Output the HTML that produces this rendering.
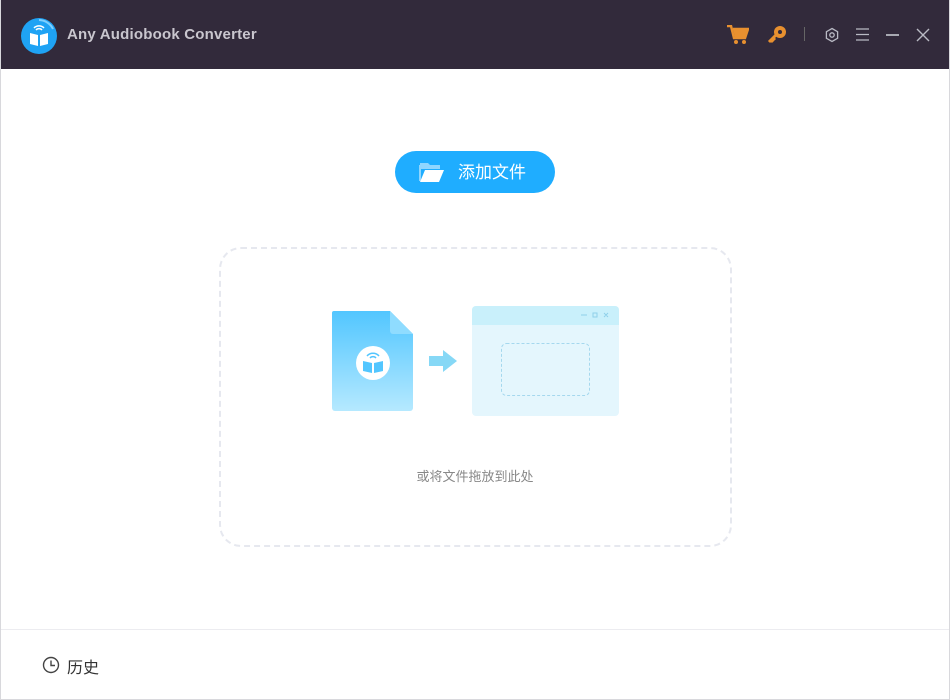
<!DOCTYPE html>
<html><head><meta charset="utf-8"><style>
*{margin:0;padding:0;box-sizing:border-box}
body{width:950px;height:700px;background:#fff;font-family:"Liberation Sans","Noto Sans CJK SC",sans-serif;position:relative;overflow:hidden}
.frame{position:absolute;inset:0;border:1px solid #d8d8dc;border-top:none}
.hdr{position:absolute;left:0;top:0;width:950px;height:69px;background:#322a3b}
.title{position:absolute;left:67px;top:26px;color:#c9c6ce;font-weight:bold;font-size:15px;letter-spacing:.2px}
.btn{position:absolute;left:395px;top:151px;width:160px;height:42px;border-radius:21px;background:#1fadff;color:#fff;font-size:17px}
.btn span{position:absolute;left:63px;top:7px}
.drop{position:absolute;left:219px;top:247px;width:513px;height:300px;border:2px dashed #e6e8ef;border-radius:22px}
.hint{position:absolute;left:0;width:950px;top:466px;text-align:center;color:#888;font-size:13px}
.foot{position:absolute;left:1px;right:1px;top:629px;height:1px;background:#ececf0}
.hist{position:absolute;left:67px;top:654px;font-size:16px;color:#333}
</style></head><body>
<div class="hdr"></div>
<svg style="position:absolute;left:20px;top:17px" width="38" height="38" viewBox="0 0 38 38">
<circle cx="19" cy="19" r="18" fill="#1fa3f4"/>
<path d="M19 3a16 16 0 0 1 14 9" stroke="#7fd0ff" stroke-width="2" fill="none"/>
<path d="M14 11a7 7 0 0 1 10 0M16 13a4 4 0 0 1 6 0" stroke="#fff" stroke-width="1.5" fill="none"/>
<path d="M10 16l8 2v11l-8-2zM28 16l-8 2v11l8-2z" fill="#fff"/>
</svg>
<div class="title">Any Audiobook Converter</div>
<svg style="position:absolute;left:727px;top:25px" width="22" height="20" viewBox="0 0 22 20"><path d="M0 1h4l3 12h11l3-9H6" fill="none" stroke="#e8902f" stroke-width="2.5"/><path d="M6 4h15l-3 9H8z" fill="#e8902f"/><circle cx="9" cy="17" r="2" fill="#e8902f"/><circle cx="17" cy="17" r="2" fill="#e8902f"/></svg>
<svg style="position:absolute;left:767px;top:25px" width="20" height="20" viewBox="0 0 20 20"><circle cx="13" cy="7" r="6" fill="#e8902f"/><circle cx="13" cy="7" r="2" fill="#322a3b"/><path d="M9 10l-7 7M4 15l2 2M6 13l2 2" stroke="#e8902f" stroke-width="3"/></svg>
<div style="position:absolute;left:804px;top:27px;width:1px;height:14px;background:#666"></div>
<svg style="position:absolute;left:824px;top:27px" width="16" height="16" viewBox="0 0 16 16"><path d="M8 1.5l5.6 3.2v6.6L8 14.5l-5.6-3.2V4.7z" fill="none" stroke="#b9bac4" stroke-width="1.3"/><circle cx="8" cy="8" r="2.2" fill="none" stroke="#b9bac4" stroke-width="1.3"/></svg>
<svg style="position:absolute;left:856px;top:28px" width="14" height="13"><path d="M0 1h13M0 6.5h13M0 12h13" stroke="#b9bac4" stroke-width="1.3"/></svg>
<div style="position:absolute;left:886px;top:34px;width:13px;height:2px;background:#a8a9b2"></div>
<svg style="position:absolute;left:916px;top:28px" width="14" height="14"><path d="M1 1l12 12M13 1L1 13" stroke="#b9bac4" stroke-width="1.4"/></svg>
<div class="btn"><svg style="position:absolute;left:24px;top:10px" width="26" height="22" viewBox="0 0 26 22"><path d="M1 2h8l2 2h10v4H1z" fill="#8fd6ff"/><path d="M1 4v16" stroke="#8fd6ff" stroke-width="2"/><path d="M6 9h19l-5 12H1z" fill="#fff"/></svg><span>添加文件</span></div>
<div class="drop"></div>
<svg style="position:absolute;left:330px;top:305px" width="292" height="112" viewBox="0 0 292 112">
<defs><linearGradient id="g" x1="0" y1="0" x2="0" y2="1"><stop offset="0" stop-color="#52c6ff"/><stop offset="1" stop-color="#b5e9ff"/></linearGradient></defs>
<path d="M4 6h56l23 23v74a3 3 0 0 1-3 3H5a3 3 0 0 1-3-3V8a2 2 0 0 1 2-2z" fill="url(#g)"/>
<path d="M60 6l23 23H63a3 3 0 0 1-3-3z" fill="#8fdcff"/>
<circle cx="43" cy="58" r="17" fill="#fff"/>
<path d="M37 51a8 8 0 0 1 12 0M40 53a4 4 0 0 1 6 0" stroke="#52c6ff" stroke-width="1.5" fill="none"/>
<path d="M33 56l9 2v10l-9-2zM53 56l-9 2v10l9-2z" fill="#52c6ff"/>
<path d="M99 51h14v-6l14 11-14 11v-6H99z" fill="#86d8f6"/>
<rect x="142" y="1" width="147" height="110" rx="4" fill="#e4f6fd"/>
<path d="M142 5a4 4 0 0 1 4-4h139a4 4 0 0 1 4 4v15H142z" fill="#c9f0fb"/>
<path d="M251 10h6M263 8h4v4h-4zM274 8l4 4M278 8l-4 4" stroke="#8fd0ea" stroke-width="1" fill="none"/>
<rect x="171.5" y="38.5" width="88" height="52" rx="5" fill="none" stroke="#a5d8ee" stroke-dasharray="3 2"/>
</svg>
<div class="hint">或将文件拖放到此处</div>
<div class="foot"></div>
<svg style="position:absolute;left:42px;top:656px" width="18" height="18"><circle cx="9" cy="9" r="7.5" fill="none" stroke="#444" stroke-width="1.4"/><path d="M9 4.5V9.5h4" fill="none" stroke="#444" stroke-width="1.4"/></svg>
<div class="hist">历史</div>
<div class="frame"></div>
</body></html>
